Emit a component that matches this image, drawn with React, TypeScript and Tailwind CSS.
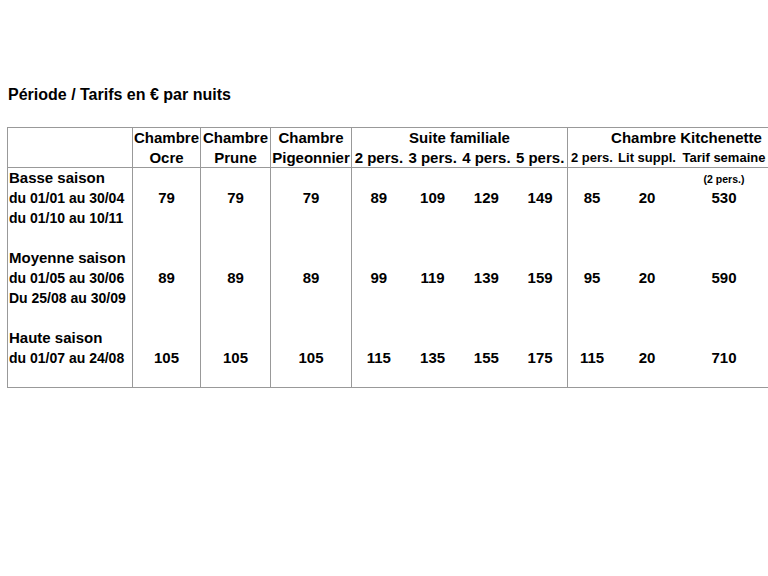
const cols = 'grid grid-cols-[125px_68px_70px_81px_216px_237px]';

const seasons = [
  {
    name: 'Basse saison',
    dates: ['du 01/01 au 30/04', 'du 01/10 au 10/11'],
    rooms: ['79', '79', '79'],
    suite: ['89', '109', '129', '149'],
    kitchen: ['85', '20', '530'],
    note: true,
    height: 80,
  },
  {
    name: 'Moyenne saison',
    dates: ['du 01/05 au 30/06', 'Du 25/08 au 30/09'],
    rooms: ['89', '89', '89'],
    suite: ['99', '119', '139', '159'],
    kitchen: ['95', '20', '590'],
    note: false,
    height: 80,
  },
  {
    name: 'Haute saison',
    dates: ['du 01/07 au 24/08'],
    rooms: ['105', '105', '105'],
    suite: ['115', '135', '155', '175'],
    kitchen: ['115', '20', '710'],
    note: false,
    height: 59,
  },
];

function Num({ value, note }: { value: string; note?: boolean }) {
  return (
    <div className="text-center">
      <div className="h-[20px] text-[10.5px] leading-[22px]">{note ? '(2 pers.)' : ''}</div>
      <div className="h-[20px] text-[15px] leading-[20px]">{value}</div>
    </div>
  );
}

export default function App() {
  return (
    <div className="min-h-[576px] w-full overflow-hidden bg-white font-['Liberation_Sans',Arial,sans-serif] font-bold text-black">
      <div className="pl-[8px] pt-[85px] text-[16px] leading-[20px]">Période / Tarifs en € par nuits</div>

      <div className="ml-[7px] mt-[22px] w-[798px] border-b border-l border-t border-[#999]">
        {/* header */}
        <div className={`${cols} h-[40px] border-b border-[#999] text-[15px] leading-[20px]`}>
          <div className="border-r border-[#999]" />
          <div className="border-r border-[#999] text-center">
            <div>Chambre</div>
            <div>Ocre</div>
          </div>
          <div className="border-r border-[#999] text-center">
            <div>Chambre</div>
            <div>Prune</div>
          </div>
          <div className="border-r border-[#999] text-center">
            <div>Chambre</div>
            <div>Pigeonnier</div>
          </div>
          <div className="border-r border-[#999]">
            <div className="text-center">Suite familiale</div>
            <div className="flex">
              {['2 pers.', '3 pers.', '4 pers.', '5 pers.'].map((p) => (
                <div key={p} className="w-[54px] whitespace-nowrap text-center">
                  {p}
                </div>
              ))}
            </div>
          </div>
          <div>
            <div className="text-center">Chambre Kitchenette</div>
            <div className="flex text-[13px]">
              <div className="w-[48px] whitespace-nowrap text-center">2 pers.</div>
              <div className="w-[62px] whitespace-nowrap text-center">Lit suppl.</div>
              <div className="w-[92px] whitespace-nowrap text-center">Tarif semaine</div>
            </div>
          </div>
        </div>

        {/* body */}
        {seasons.map((s) => (
          <div key={s.name} className={cols} style={{ height: s.height }}>
            <div className="border-r border-[#999] pl-[1px] leading-[20px]">
              <div className="text-[15px]">{s.name}</div>
              {s.dates.map((d) => (
                <div key={d} className="whitespace-nowrap text-[14px]">
                  {d}
                </div>
              ))}
            </div>
            {s.rooms.map((r, i) => (
              <div key={i} className="border-r border-[#999]">
                <Num value={r} />
              </div>
            ))}
            <div className="flex border-r border-[#999]">
              {s.suite.map((v, i) => (
                <div key={i} className="w-[54px]">
                  <Num value={v} />
                </div>
              ))}
            </div>
            <div className="flex">
              <div className="w-[48px]">
                <Num value={s.kitchen[0]} />
              </div>
              <div className="w-[62px]">
                <Num value={s.kitchen[1]} />
              </div>
              <div className="w-[92px]">
                <Num value={s.kitchen[2]} note={s.note} />
              </div>
            </div>
          </div>
        ))}
      </div>
    </div>
  );
}
